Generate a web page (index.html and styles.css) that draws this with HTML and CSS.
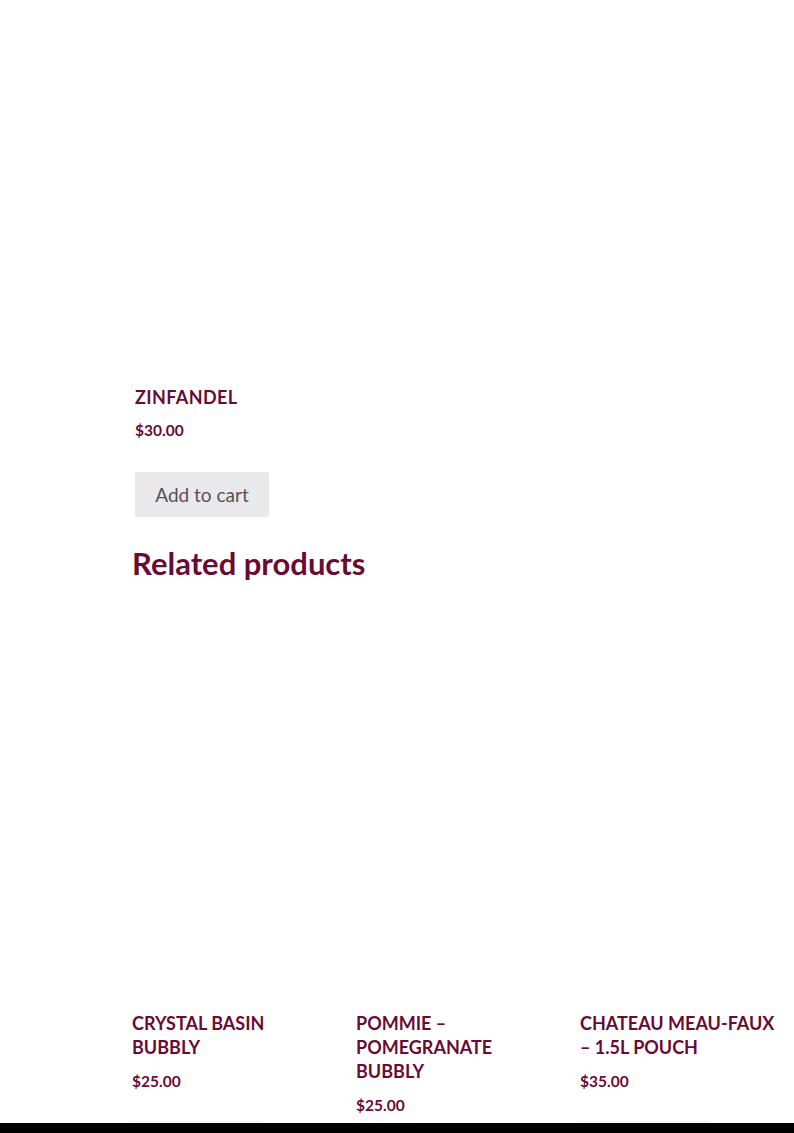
FILE: index.html
```html
<!DOCTYPE html>
<html lang="en">
<head>
<meta charset="utf-8">
<title>Zinfandel</title>
<link rel="stylesheet" href="styles.css">
</head>
<body>
<main class="page">
  <section class="product">
    <div class="product-image"></div>
    <h1 class="product-title">ZINFANDEL</h1>
    <p class="product-price">$30.00</p>
    <button class="btn-cart">Add to cart</button>
  </section>
  <section class="related">
    <h2 class="related-title">Related products</h2>
    <ul class="grid">
      <li class="card">
        <div class="card-image"></div>
        <h3 class="card-title">CRYSTAL BASIN BUBBLY</h3>
        <p class="card-price">$25.00</p>
        <div class="btn-edge"></div>
      </li>
      <li class="card">
        <div class="card-image"></div>
        <h3 class="card-title">POMMIE – POMEGRANATE BUBBLY</h3>
        <p class="card-price">$25.00</p>
      </li>
      <li class="card">
        <div class="card-image"></div>
        <h3 class="card-title">CHATEAU MEAU-FAUX – 1.5L POUCH</h3>
        <p class="card-price">$35.00</p>
        <div class="btn-edge"></div>
      </li>
    </ul>
  </section>
</main>
<div class="bottom-bar"></div>
</body>
</html>
```

FILE: styles.css
```css
* { box-sizing: border-box; }
html, body { margin: 0; padding: 0; background: #fff; }
body {
  font-family: "Lato", "Open Sans", sans-serif;
  color: #6a0b34;
  overflow: hidden;
  height: 1133px;
}
.page { padding-left: 132px; }
.product { padding-left: 3px; }
.product-image { height: 385px; }
.product-title {
  margin: 0;
  font-size: 18px;
  line-height: 24px;
  font-weight: 700;
  letter-spacing: 0.4px;
}
.product-price {
  margin: 11px 0 0;
  font-size: 15.5px;
  line-height: 20px;
  font-weight: 700;
}
.btn-cart {
  display: block;
  margin-top: 32px;
  width: 134px;
  height: 45px;
  border: 0;
  border-radius: 2px;
  background: #e9e8ea;
  color: #57525a;
  font-family: inherit;
  font-size: 19px;
  padding: 0;
}
.related-title {
  margin: 26px 0 0;
  font-size: 31px;
  line-height: 40px;
  font-weight: 700;
}
.grid {
  list-style: none;
  margin: 0;
  padding: 0;
  display: grid;
  grid-template-columns: repeat(3, 200px);
  column-gap: 24px;
}
.card-image { height: 428px; }
.card-title {
  margin: 0;
  font-size: 18px;
  line-height: 24px;
  font-weight: 700;
}
.card-price {
  margin: 12px 0 0;
  font-size: 15.5px;
  line-height: 20px;
  font-weight: 700;
}
.btn-edge {
  margin: 30px 0 0 2px;
  width: 126px;
  height: 1px;
  background: #f0eff1;
}
.bottom-bar {
  position: fixed;
  left: 0;
  right: 0;
  bottom: 0;
  height: 10px;
  background: #000;
}
```
